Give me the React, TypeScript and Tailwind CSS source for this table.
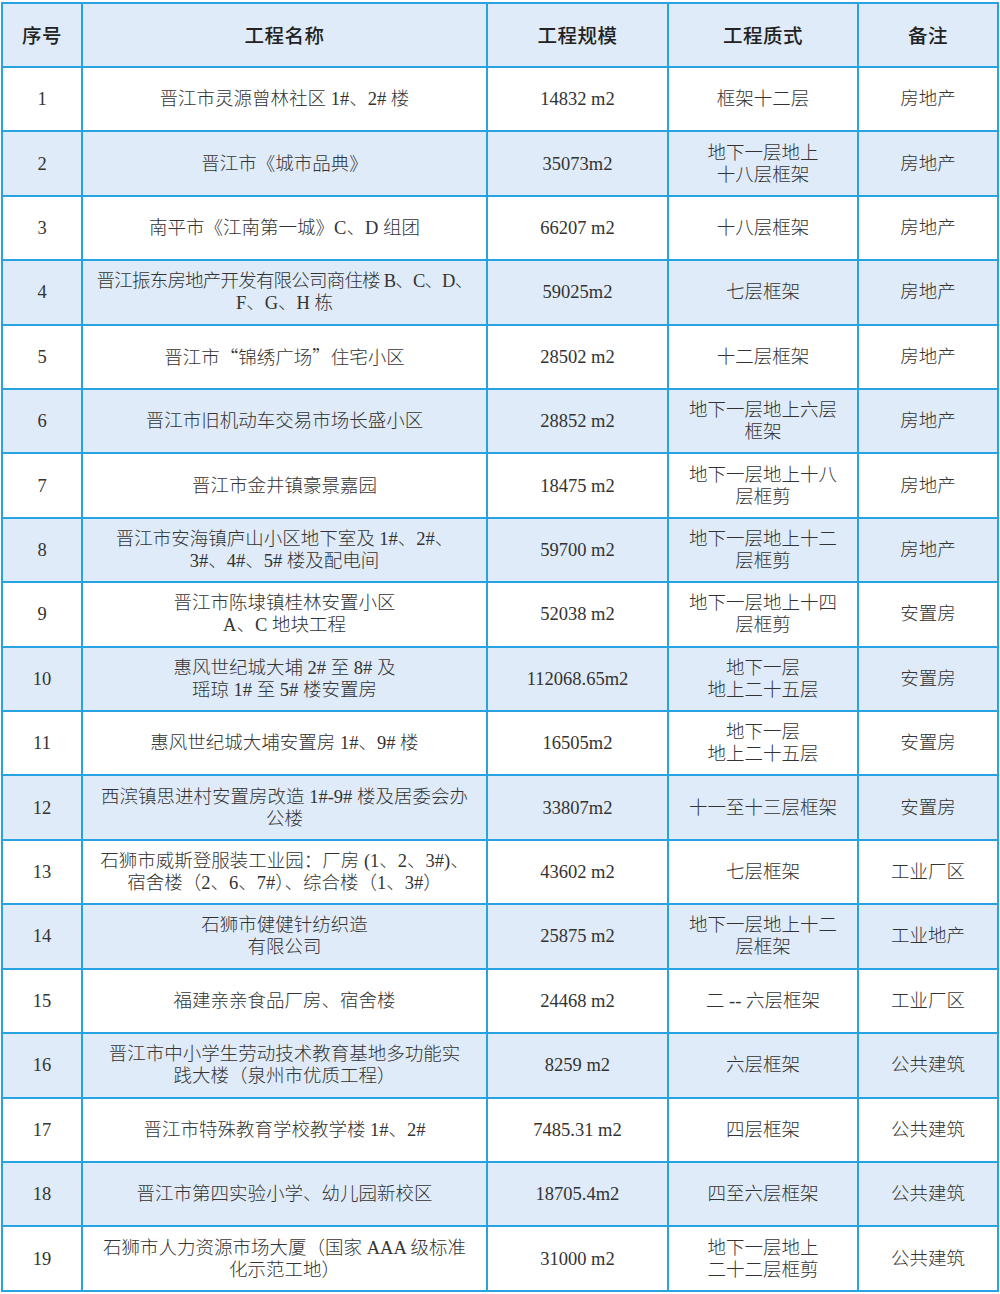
import React from "react";

type Row = [string, React.ReactNode, string, React.ReactNode, string];

const br = (a: React.ReactNode, b: React.ReactNode) => (
  <>
    {a}
    <br />
    {b}
  </>
);

const Q = ({ c }: { c: string }) => (
  <span className="font-['Noto_Sans_CJK_SC',serif]">{c}</span>
);

const rows: Row[] = [
  ["1", "晋江市灵源曾林社区 1#、2# 楼", "14832 m2", "框架十二层", "房地产"],
  ["2", "晋江市《城市品典》", "35073m2", br("地下一层地上", "十八层框架"), "房地产"],
  ["3", "南平市《江南第一城》C、D 组团", "66207 m2", "十八层框架", "房地产"],
  [
    "4",
    br(
      <span className="tracking-[-0.8px]">晋江振东房地产开发有限公司商住楼 B、C、D、</span>,
      "F、G、H 栋"
    ),
    "59025m2",
    "七层框架",
    "房地产",
  ],
  [
    "5",
    <>
      晋江市<Q c="“" />锦绣广场<Q c="”" />住宅小区
    </>,
    "28502 m2",
    "十二层框架",
    "房地产",
  ],
  ["6", "晋江市旧机动车交易市场长盛小区", "28852 m2", br("地下一层地上六层", "框架"), "房地产"],
  ["7", "晋江市金井镇豪景嘉园", "18475 m2", br("地下一层地上十八", "层框剪"), "房地产"],
  ["8", br("晋江市安海镇庐山小区地下室及 1#、2#、", "3#、4#、5# 楼及配电间"), "59700 m2", br("地下一层地上十二", "层框剪"), "房地产"],
  ["9", br("晋江市陈埭镇桂林安置小区", "A、C 地块工程"), "52038 m2", br("地下一层地上十四", "层框剪"), "安置房"],
  ["10", br("惠风世纪城大埔 2# 至 8# 及", "瑶琼 1# 至 5# 楼安置房"), "112068.65m2", br("地下一层", "地上二十五层"), "安置房"],
  ["11", "惠风世纪城大埔安置房 1#、9# 楼", "16505m2", br("地下一层", "地上二十五层"), "安置房"],
  ["12", br("西滨镇思进村安置房改造 1#-9# 楼及居委会办", "公楼"), "33807m2", "十一至十三层框架", "安置房"],
  ["13", br("石狮市威斯登服装工业园：厂房 (1、2、3#)、", "宿舍楼（2、6、7#）、综合楼（1、3#）"), "43602 m2", "七层框架", "工业厂区"],
  ["14", br("石狮市健健针纺织造", "有限公司"), "25875 m2", br("地下一层地上十二", "层框架"), "工业地产"],
  ["15", "福建亲亲食品厂房、宿舍楼", "24468 m2", "二 -- 六层框架", "工业厂区"],
  ["16", br("晋江市中小学生劳动技术教育基地多功能实", "践大楼（泉州市优质工程）"), "8259 m2", "六层框架", "公共建筑"],
  ["17", "晋江市特殊教育学校教学楼 1#、2#", "7485.31 m2", "四层框架", "公共建筑"],
  ["18", "晋江市第四实验小学、幼儿园新校区", "18705.4m2", "四至六层框架", "公共建筑"],
  ["19", br("石狮市人力资源市场大厦（国家 AAA 级标准", "化示范工地）"), "31000 m2", br("地下一层地上", "二十二层框剪"), "公共建筑"],
];

const headers = ["序号", "工程名称", "工程规模", "工程质式", "备注"];

export default function App() {
  return (
    <div className="w-[1000px] h-[1294px] bg-white pl-[1px] pt-[2px]">
      <table className="border-collapse table-fixed w-[996px] text-[#333]">
        <colgroup>
          <col className="w-[80px]" />
          <col className="w-[405px]" />
          <col className="w-[181px]" />
          <col className="w-[190px]" />
          <col className="w-[140px]" />
        </colgroup>
        <thead>
          <tr className="h-[64px] bg-[#dfebf8]">
            {headers.map((h) => (
              <th
                key={h}
                className="border-2 border-[#27a3e2] p-0 text-center align-middle text-[19.5px] font-medium text-[#222] tracking-[0.5px] font-['Noto_Sans_CJK_SC','Noto_Sans',sans-serif]"
              >
                {h}
              </th>
            ))}
          </tr>
        </thead>
        <tbody>
          {rows.map((r, i) => (
            <tr
              key={i}
              className={`h-[64.42px] ${i % 2 === 1 ? "bg-[#dfebf8]" : "bg-white"}`}
            >
              {r.map((c, j) => (
                <td
                  key={j}
                  className="border-2 border-[#27a3e2] p-0 text-center align-middle text-[18.5px] leading-[22px] font-['Liberation_Serif','Noto_Sans_CJK_SC',serif] font-light"
                >
                  {c}
                </td>
              ))}
            </tr>
          ))}
        </tbody>
      </table>
    </div>
  );
}
